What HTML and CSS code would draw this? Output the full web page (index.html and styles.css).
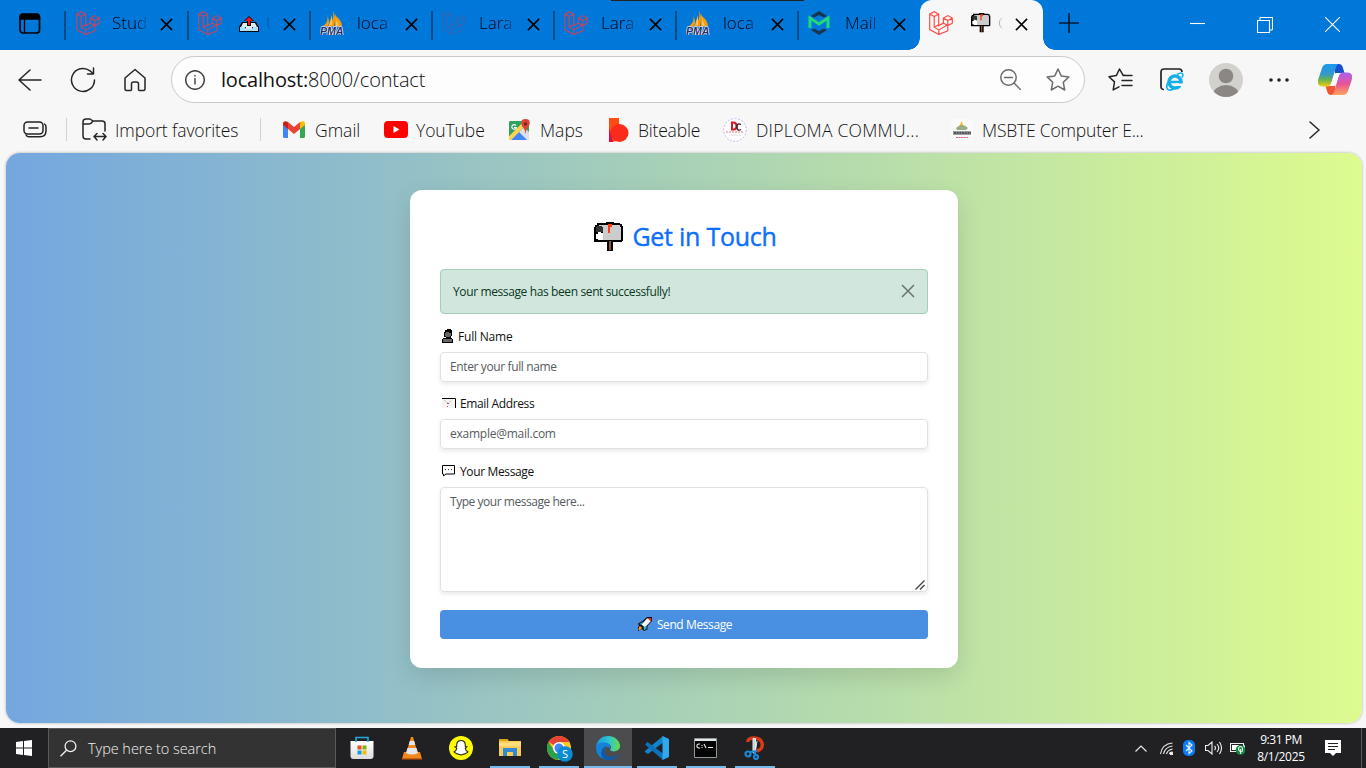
FILE: index.html
```html
<!DOCTYPE html>
<html lang="en">
<head>
<meta charset="utf-8">
<title>Contact</title>
<link rel="stylesheet" href="styles.css">
</head>
<body>
<svg class="defs" width="0" height="0" aria-hidden="true">
  <defs>
    <symbol id="laravel" viewBox="0 0 24 24"><path d="M.7 3.1 5.200.7l4.500 2.400v11.700l4.700-2.700V7.100l4.500-2.500 4.400 2.500v5.100l-4.500 2.500v5.200L9.800 23.500.7 18.600zM.7 3.100l4.500 2.500 4.500-2.500M5.200 5.600v10.600l4.600 2.700 9-5.100M9.800 18.900V23.500M14.400 7.100l4.400 2.500 4.500-2.500M18.800 9.600v5.100l-4.400-2.600M5.200 16.200l4.500-2.500"/></symbol>
    <symbol id="close" viewBox="0 0 14 14"><path d="M1 1l12 12M13 1L1 13"/></symbol>
    <symbol id="pma" viewBox="0 0 24 24"><path fill="#f89c0e" d="M7 5c1 3 1 7-5 11l6-1c2-3 1-7-1-10zM13 0c3 5 2 11 1 15H8c5-4 6-10 5-15zM15 3c1 4 6 4 7 12h-7z"/><path fill="#ffc14f" d="M16 7l3 8h-3zM12 4v10H9z"/><path fill="#999" d="M3 15h18v1H3z"/><text class="pma-word" x="0" y="23.500" textLength="23.500" lengthAdjust="spacingAndGlyphs">PMA</text></symbol>
    <symbol id="mailbox" viewBox="0 0 30 30"><path fill="#000" d="M3 1h9V0h8v1h6v1h2v2h1v15h-1v1H19v9h-6v-9H0V5h1V3h2z"/><path fill="#ccc" d="M5 3h21v2h1v13H9V8H8V5H5z"/><path fill="#333" d="M3 4h5v1h1v5H2V5h1z"/><path fill="#fff" d="M4 10h3v1h2v7H4v-1H2v-5h2z"/><path fill="#ff3b12" d="M14 2h4v3h-2v6h-2z"/><path fill="#8c5730" d="M15 19h2v9h-2z"/></symbol>
  </defs>
</svg>
<div class="screen">
  <header class="tabstrip">
    <div class="workspace"><svg width="22" height="22" viewBox="0 0 22 22"><rect x="1" y="1.500" width="19.500" height="18.500" rx="3" fill="none" stroke="#000" stroke-width="1.700"/><path d="M1 6V4q0-3 3-3h13.500q3 0 3 3v2zM5.500 6v14" stroke="#000" stroke-width="1.300"/></svg></div>
    <div class="tab first"><svg class="fav lara"><use href="#laravel"/></svg><span class="tab-title">Stud</span><svg class="x"><use href="#close"/></svg></div>
    <div class="tab"><svg class="fav lara"><use href="#laravel"/></svg><span class="tab-title"><svg class="outbox" viewBox="0 0 20 16"><path d="M3 6h14l3 5v5H0v-5z" fill="#000"/><path d="M4 7h12l2 4h-5v2H7v-2H2z" fill="#dfeaf1"/><path d="M1 11h5l1 2h6l1-2h5v4H1z" fill="#aee0fa"/><path d="M10 0l5 5h-3v5H8V5H5z" fill="#000"/><path d="M10 1l4 4h-3v4H9V5H6z" fill="#f11"/></svg><span>U</span></span><svg class="x"><use href="#close"/></svg></div>
    <div class="tab"><svg class="fav"><use href="#pma"/></svg><span class="tab-title">loca</span><svg class="x"><use href="#close"/></svg></div>
    <div class="tab"><svg class="fav lara dim"><use href="#laravel"/></svg><span class="tab-title">Lara</span><svg class="x"><use href="#close"/></svg></div>
    <div class="tab"><svg class="fav lara"><use href="#laravel"/></svg><span class="tab-title">Lara</span><svg class="x"><use href="#close"/></svg></div>
    <div class="tab"><svg class="fav"><use href="#pma"/></svg><span class="tab-title">loca</span><svg class="x"><use href="#close"/></svg></div>
    <div class="tab"><svg class="fav" viewBox="0 0 24 24"><path d="M3 5l8-5 8 5-3 1.500L11 4 6 6.500zM3 19l8 5 8-5-3-1.500-5 2.500-5-2.500z" fill="#18344f"/><path d="M2 17V7l9 6 9-6v10" fill="none" stroke="#22d77c" stroke-width="3"/></svg><span class="tab-title">Mail</span><svg class="x"><use href="#close"/></svg></div>
    <div class="tab active"><svg class="fav lara bright"><use href="#laravel"/></svg><span class="tab-title"><svg class="mini-mail"><use href="#mailbox"/></svg><span>C</span></span><svg class="x"><use href="#close"/></svg></div>
    <svg class="newtab" width="20" height="20" viewBox="0 0 20 20"><path d="M10 0v20M0 10h20" stroke="#001a33" stroke-width="1.600"/></svg>
    <div class="wincontrols">
      <svg width="15" height="16" viewBox="0 0 15 16"><path d="M0 6.500h15"/></svg>
      <svg width="16" height="16" viewBox="0 0 16 16"><path d="M.5 3.500h12v12H.5zM3 3V1q0-.5 1-.5h11.500V12q0 1-1 1H13"/></svg>
      <svg width="15" height="15" viewBox="0 0 15 15"><path d="M0 0l15 15M15 0L0 15"/></svg>
    </div>
    <div class="drag-line"></div>
  </header>

  <nav class="toolbar">
    <svg class="ln back" width="24" height="22" viewBox="0 0 24 22"><path d="M12 1L1 11l11 10M1 11h22"/></svg>
    <svg class="ln reload" width="26" height="26" viewBox="0 0 26 26"><path d="M24.500 13A11.500 11.500 0 1 1 20 3.800L23.500 7M23.500 1v6h-6"/></svg>
    <svg class="ln home" width="22" height="24" viewBox="0 0 22 24"><path d="M1 10L11 1.500 21 10v11q0 1.500-1.500 1.500h-4q-1 0-1-1V16q0-2-2-2h-3q-2 0-2 2v5.500q0 1-1 1h-4Q1 22.500 1 21z"/></svg>
    <div class="address">
      <svg class="ln info" width="20" height="20" viewBox="0 0 20 20"><circle cx="10" cy="10" r="9.300"/><path d="M10 8.500V14M10 5.500v.5"/></svg>
      <span class="url"><b>localhost:</b>8000/contact</span>
      <svg class="ln grey" width="21" height="21" viewBox="0 0 21 21"><circle cx="8.500" cy="8.500" r="7.700"/><path d="M14 14l6.500 6.500M4.500 8.500h8"/></svg>
      <svg class="ln grey star" width="24" height="23" viewBox="0 0 24 23"><path d="M12 1l3.200 6.900 7.700 1-5.600 5.400 1.400 7.700L12 18.200 5.300 22l1.400-7.700L1.100 8.900l7.700-1z"/></svg>
    </div>
    <svg class="ln favs" width="25" height="24" viewBox="0 0 25 24"><path d="M18 7.500l-3-.4L11.500 1 8.300 7.600 1 8.700l5.500 5.200-1.300 8 5.800-3.100M15 7.500h9M14 12.500h10M14 17.500h10"/></svg>
    <svg class="ie" width="24" height="24" viewBox="0 0 24 24"><path d="M4 21.500q-3 0-3-3V4q0-3 3-3h15q3 0 3 3" fill="none" stroke="#222" stroke-width="1.700"/><circle cx="15" cy="14" r="6" fill="none" stroke="#17afe8" stroke-width="3.500"/><path d="M9 14h13.500" stroke="#17afe8" stroke-width="2.500"/><path d="M16 15.500h8v2.500h-8z" fill="#f7f7f7"/><path d="M17 6.500c5-3 7-1 5 3M9 13c-5 7-1 12 6 7" fill="none" stroke="#17afe8" stroke-width="1.700"/></svg>
    <svg class="avatar" width="34" height="34" viewBox="0 0 34 34"><clipPath id="av"><circle cx="17" cy="17" r="17"/></clipPath><g clip-path="url(#av)"><path fill="#d3d1ce" d="M0 0h34v34H0z"/><circle cx="17" cy="13" r="7.300" fill="#8b8784"/><ellipse cx="17" cy="32" rx="13" ry="10" fill="#8b8784"/></g></svg>
    <svg class="dots" width="20" height="4" viewBox="0 0 20 4"><circle cx="2" cy="2" r="1.800"/><circle cx="10" cy="2" r="1.800"/><circle cx="18" cy="2" r="1.800"/></svg>
    <svg class="copilot" width="34" height="31" viewBox="0 0 34 31"><defs><linearGradient id="c1" x2="0" y2="1"><stop stop-color="#179bf0"/><stop offset=".45" stop-color="#3498c8"/><stop offset=".7" stop-color="#68b44d"/><stop offset="1" stop-color="#f7cb14"/></linearGradient><linearGradient id="c2" x2="0" y2="1"><stop stop-color="#a861f4"/><stop offset=".5" stop-color="#e8539a"/><stop offset="1" stop-color="#ffa35a"/></linearGradient></defs><path d="M17 0h4q3 0 4 4l1.500 5H20l-3 4z" fill="#1850cf"/><path d="M17 31h-4q-3 0-4-4l-1.500-5H14l3-4z" fill="#ef5632"/><path d="M9 0h12q-2 0-3 3l-4.500 15.500q-1 4-4 4H5q-7 0-4.500-8L4 4q1.500-4 5-4z" fill="url(#c1)"/><path d="M25 31H13q2 0 3-3l4.500-15.500q1-4 4-4H29q7 0 4.500 8L30 27q-1.500 4-5 4z" fill="url(#c2)"/><path d="M18 9h5q-2 1-2.500 3.500L18.500 19q-1 3-3.500 3h-4q2-1 2.500-3.500l2-6.500q.8-3 2.500-3z" fill="#fff"/></svg>
  </nav>

  <nav class="bookmarks">
    <svg class="ln side" width="24" height="17" viewBox="0 0 24 17"><rect x="1" y="1" width="19" height="12" rx="3.500"/><path d="M6 7h9M3 14q1 1.800 3 1.800h11q6 0 6-6V6q0-2-1.500-3"/></svg>
    <i class="bar"></i>
    <svg class="ln folder" width="26" height="23" viewBox="0 0 26 23"><path d="M8 21H4q-3 0-3-3V4q0-3 3-3h4l3 2h9q3 0 3 3v7M1 6h6q2 0 4-3M12 18.500h12M15 15.500l-3 3 3 3.500M21 15.500l3 3-3 3.500"/></svg>
    <span class="bm import">Import favorites</span>
    <i class="bar bar2"></i>
    <svg class="gmail" width="22" height="17" viewBox="0 0 22 17"><path fill="#4285f4" d="M0 3l5 4v10H1.500Q0 17 0 15.500z"/><path fill="#34a853" d="M17 7l5-4v12.500q0 1.500-1.500 1.500H17z"/><path fill="#ea4335" d="M5 1l6 5 6-5v7l-6 5-6-5z"/><path fill="#c5221f" d="M0 3q0-4 5-2v7L0 4z"/><path fill="#fbbc04" d="M22 3q0-4-5-2v7l5-4z"/></svg>
    <span class="bm b1">Gmail</span>
    <svg class="yt" width="24" height="17" viewBox="0 0 24 17"><rect width="24" height="17" rx="4" fill="#f00"/><path d="M9.500 5l6 3.500-6 3.500z" fill="#fff"/></svg>
    <span class="bm b2">YouTube</span>
    <svg class="maps" width="22" height="22" viewBox="0 0 22 22"><rect x="0" y="2" width="20" height="19" rx="2" fill="#2fa35a"/><path d="M2 21L15 8l5 5v8z" fill="#dde1e6"/><path d="M2 21l8-8 8 8z" fill="#4285f4"/><path d="M0 17L13 4l3 3L2 21H0z" fill="#fdd353"/><path d="M0 4q0-2 2-2h13L0 17z" fill="#2fa35a"/><path d="M16.500 15q0-4-3.500-8Q10.500 0 16.500 0T20 7q-3.500 4-3.500 8z" fill="#db4437"/><circle cx="16.500" cy="5" r="1.700" fill="#7b231e"/><path d="M7 6.500a2.300 2.300 0 1 0 .4 2H5" fill="none" stroke="#fff" stroke-width="1.200"/></svg>
    <span class="bm b3">Maps</span>
    <svg class="bite" width="20" height="24" viewBox="0 0 20 24"><path d="M0 0h10v7l-3 16-3 1H0z" fill="#ff4b12"/><circle cx="10.500" cy="15" r="9" fill="#fa2b1a"/><path d="M0 10l4 14H0z" fill="#e10b43"/></svg>
    <span class="bm b4">Biteable</span>
    <svg class="dip" width="24" height="24" viewBox="0 0 24 24"><circle cx="12" cy="12" r="11.300" fill="#fff" stroke="#cfb2ee" stroke-dasharray="2 1.500"/><path d="M9 4.500h1.500q3 0 3 3.500t-3 3.500H9z" fill="none" stroke="#d41b20" stroke-width="2"/><path d="M18 6.500q-4-2-4 2.500t4 2.500" fill="none" stroke="#222" stroke-width="1.300"/><path d="M3 14h18" stroke="#f07474" stroke-dasharray="2 1"/><path d="M6 17h12" stroke="#ddd"/></svg>
    <span class="bm b5">DIPLOMA COMMU...</span>
    <svg class="msb" width="22" height="22" viewBox="0 0 22 22"><path fill="#fafafa" d="M0 0h22v22H0z"/><path d="M10.500 2l2 5h-4z" fill="#f3bd25"/><path d="M5 9q6-6 12 0l-2 2H6z" fill="#81996d" opacity=".8"/><path d="M2 12h18v4H2z" fill="#777" opacity=".7"/><path d="M3 14h17" stroke="#303c40" stroke-width="1.500" stroke-dasharray="2 .7"/><path d="M5 18.500h12" stroke="#e35b80" stroke-width="1.200" stroke-dasharray="2 .6"/></svg>
    <span class="bm b6">MSBTE Computer E...</span>
    <svg class="ln more" width="11" height="18" viewBox="0 0 11 18"><path d="M1 1l9 8-9 8"/></svg>
  </nav>

  <main class="page">
    <section class="card">
      <h1><svg width="30" height="30"><use href="#mailbox"/></svg><span>Get in Touch</span></h1>
      <div class="alert"><span>Your message has been sent successfully!</span><svg width="14" height="14"><use href="#close"/></svg></div>
      <div class="label"><svg width="12" height="14" viewBox="0 0 12 14"><path fill="#000" d="M3 1h2V0h4v1h1v6H9v2h1v1h1v4H0v-4h1V9h3V8H2V3h1z"/><path fill="#666" d="M4 3h3v1h2v3H8v1H4V7H3V4h1zM1 10h9v3H1z"/></svg><span class="l1">Full Name</span></div>
      <div class="field"><span class="p1">Enter your full name</span></div>
      <div class="label lab2"><svg width="14" height="10" viewBox="0 0 14 10"><path fill="#f4f4f4" d="M0 1h13v9H0z"/><path d="M0 .5h13.500V10" fill="none" stroke="#000"/><path d="M2 2l4 3 4-3" fill="none" stroke="#aaa" stroke-dasharray="1 1"/><path d="M5 5.500h2M5 8.500h1" stroke="#d54b3d"/></svg><span class="l2">Email Address</span></div>
      <div class="field"><span class="p2">example@mail.com</span></div>
      <div class="label lab3"><svg width="14" height="12" viewBox="0 0 14 12"><path d="M1 .5h11.500v8.500H4L1.500 11V9H.5V.5z" fill="#fff" stroke="#000"/><path d="M3 4.500h8" stroke="#333" stroke-dasharray="1 2"/></svg><span class="l3">Your Message</span></div>
      <div class="field area"><span class="p3">Type your message here...</span><svg width="10" height="10" viewBox="0 0 10 10"><path d="M.5 9.500l9-9M5 9.500L9.500 5" stroke="#444" stroke-width="1.400"/></svg></div>
      <div class="send"><svg width="14" height="14" viewBox="0 0 14 14"><path d="M14 0v4L9.500 9v3.500L6 14l-2-2-4 2v-4l1-1-1-2.500L4.500 4 9 0z" fill="#111"/><path d="M13 1v3L7 10.500 3.500 7.500 9 1.500z" fill="#f5f8fa"/><path d="M9.500 1h3.800v4z" fill="#e8231b"/><path d="M5 4.500L1.500 7l2 1zM8.500 9v3L6 13l-.5-3z" fill="#24a9e8"/><path d="M1 9.500h2l1 1.500-2 2H.500z" fill="#ff9d20"/></svg><span>Send Message</span></div>
    </section>
  </main>

  <footer class="taskbar">
    <div class="start"><svg width="16" height="16" viewBox="0 0 16 16"><path fill="#fff" d="M0 2l7-1v6.500H0zM8 1l8-1v7.500H8zM0 8.500h7V15l-7-1zM8 8.500h8V16l-8-1z"/></svg></div>
    <div class="search"><svg width="17" height="17" viewBox="0 0 17 17"><circle cx="10.500" cy="6.200" r="5.400" fill="none" stroke="#eee" stroke-width="1.300"/><path d="M6.500 10.200L.5 16.300" stroke="#eee" stroke-width="1.400"/></svg><span>Type here to search</span></div>
    <div class="apps">
      <div class="app store"><svg width="24" height="24" viewBox="0 0 24 24"><defs><linearGradient id="sg" x2="0" y2="1"><stop stop-color="#fff"/><stop offset="1" stop-color="#ddd"/></linearGradient></defs><path d="M.5 5h23v15q0 3-3 3h-17q-3 0-3-3z" fill="url(#sg)"/><path d="M6 6V1.500h12V6" fill="none" stroke="#20a9df" stroke-width="1.600"/><path fill="#e74e26" d="M7.500 9.500h4v4h-4z"/><path fill="#7db700" d="M12.500 9.500h4v4h-4z"/><path fill="#08a0e8" d="M7.500 14.500h4v4h-4z"/><path fill="#fdb600" d="M12.500 14.500h4v4h-4z"/></svg></div>
      <div class="app"><svg width="22" height="24" viewBox="0 0 22 24"><path d="M3 16h16l2 7H1z" fill="#f1871d"/><path d="M10 1h2l5 17q-6 4-12 0z" fill="#f38c21"/><path d="M8.800 5h4.400l1 4H7.700zM6.500 12h9l1.500 5q-6 3-12 0z" fill="#e5e8eb"/><path d="M1 22h20v1.500H1z" fill="#cc5b0c"/></svg></div>
      <div class="app"><svg width="24" height="24" viewBox="0 0 24 24"><circle cx="12" cy="12" r="12" fill="#fffb05"/><path d="M12 4.500c4 0 4.500 3 4.300 6l1.600.4-1.700 1.500c.5 2 1.500 3 2.800 3.500-.5 1.200-2.500.8-3 2-1.500-.3-2 1-4 1s-2.500-1.300-4-1c-.5-1.200-2.500-.8-3-2 1.300-.5 2.300-1.500 2.800-3.500L6.100 10.900l1.600-.4c-.2-3 .3-6 4.300-6z" fill="#fff" stroke="#222" stroke-width="1.100"/></svg></div>
      <div class="app run"><svg width="22" height="20" viewBox="0 0 22 20"><path d="M0 2h9l1 1h12v15H0z" fill="#f9cc59"/><path d="M0 1h9v2H0z" fill="#dba51b"/><path d="M0 5h9l2-1h11v4H0z" fill="#ffdd7a"/><path d="M4 18v-8h14v8h-4v-4H8v4z" fill="#3189d6"/></svg></div>
      <div class="app run"><svg class="chrome" width="26" height="26" viewBox="0 0 26 26"><circle cx="12" cy="12" r="12" fill="#fac827"/><path d="M12 12L1.600 6A12 12 0 0 1 22.400 6H12z" fill="#e94335"/><path d="M1.600 6A12 12 0 0 0 11 24l5-9-8.500 0z" fill="#2aa24a"/><circle cx="12" cy="12" r="6" fill="#fff"/><circle cx="12" cy="12" r="4.500" fill="#4285f4"/><circle cx="18" cy="18" r="7.800" fill="#078bd3"/><text x="18" y="22" class="s-letter">S</text></svg></div>
      <div class="app run current"><svg width="24" height="24" viewBox="0 0 24 24"><defs><linearGradient id="e1"><stop stop-color="#1d94dc"/><stop offset=".5" stop-color="#2ac1d8"/><stop offset="1" stop-color="#66de4c"/></linearGradient></defs><path d="M0 11C1 3 7 0 12 0c7 0 12 5 12 10 0 5-7 7-10 4 3-4-1-7-5-7-5 0-8 2-9 4z" fill="url(#e1)"/><path d="M0 12C0 8 4 6.500 8 6.500c5 0 7 3 6 6-3-3-6-1-6 3 0 3 3 7 7 8C6 25 0 19 0 12z" fill="#1583d7"/><path d="M12.500 9.500C8 10 7 15 9 18c3 4 9 4 13 .5 1 .2.500.7 0 1.500-3 4-9 5-13 3.500C3 21 4 10 12.500 9.500z" fill="#0d5cab"/></svg></div>
      <div class="app run"><svg width="24" height="24" viewBox="0 0 24 24"><path d="M18 0v6.500L3 18l-3-2 0-1z" fill="#1483cd"/><path d="M0 8.500L2.500 6 18 17.500V24z" fill="#0c73bb"/><path d="M17.500 0L24 3v18l-6.500 3z" fill="#30a8ee"/></svg></div>
      <div class="app run"><svg width="23" height="20" viewBox="0 0 23 20"><path d="M.5.500h22v19H.5z" fill="#050505" stroke="#929999"/><path d="M1 1h21v2H1z" fill="#e3e8eb"/><path d="M6 6H4.500L3 7v2l1.500 1H6M8 7v1M8 9v1M10 6l2 4M14 9.500h5" fill="none" stroke="#eee" stroke-width="1.100"/></svg></div>
      <div class="app run snip"><svg width="22" height="24" viewBox="0 0 22 24"><path d="M4 6C3 1 16 0 18 7c1 4-1 7-5 8" fill="none" stroke="#d83b16" stroke-width="3.500"/><path d="M9 2.500h2.500V17H9zM13 5l-2 13" fill="#c5d0d6" stroke="#e6edef"/><circle cx="4" cy="18" r="2.500" fill="none" stroke="#1789d7" stroke-width="2.200"/><circle cx="12" cy="21" r="2" fill="none" stroke="#1789d7" stroke-width="2.200"/><path d="M6 16l7-1M11.500 18.500l-1-4" stroke="#1789d7" stroke-width="2"/></svg></div>
    </div>
    <div class="tray">
      <svg class="t1" width="12" height="7" viewBox="0 0 12 7"><path d="M.5 6.500L6 1l5.500 5.500"/></svg>
      <svg class="t2" width="13" height="13" viewBox="0 0 13 13"><path d="M.5 12Q2 2 12.500 1M3.500 12Q5 5 12.500 4M6.500 12q1-4 6-5M9.500 12q0-2 3-2"/><circle cx="11.500" cy="11.500" r="1.300" fill="#fff"/></svg>
      <svg class="t3" width="12" height="16" viewBox="0 0 12 16"><rect width="12" height="16" rx="5" fill="#087cf0" stroke="none"/><path d="M3 5l6 6-3 2.500v-11L9 5l-6 6"/></svg>
      <svg class="t4" width="17" height="14" viewBox="0 0 17 14"><path d="M.5 4.500h2.500L7 1v12L3 9.500H.500zM9.500 5q2 2 0 4M12 3q3.500 4 0 8M14.500 1q4 6 0 12"/></svg>
      <svg class="t5" width="16" height="13" viewBox="0 0 16 13"><path d="M.5 1.500h13v8H.5z"/><path d="M2 3h7v5H2zM14 3.500h1v4h-1z" fill="#fff" stroke="none"/><circle cx="10.500" cy="8" r="4.800" fill="#10893e" stroke="none"/><path d="M10.500 12V7M8.500 7.500q0-3 2-3t2 3-2 2-2-2z"/></svg>
      <div class="clock"><span>9:31 PM</span><span class="date">8/1/2025</span></div>
      <svg class="t6" width="16" height="16" viewBox="0 0 16 16"><path d="M0 0h16v13h-5l-3 3-3-3H0z" fill="#fff" stroke="none"/><path d="M3 3.500h10M3 6.500h10M3 9.500h7" stroke="#222"/></svg>
      <i class="peek"></i>
    </div>
  </footer>
</div>
</body>
</html>
```
FILE: styles.css
```css
* { box-sizing: border-box; }
body { margin: 0; font-family: "Open Sans", "Noto Sans", sans-serif; }
.screen { width: 1366px; height: 768px; display: flex; flex-direction: column; background: #f7f7f7; overflow: hidden; }
.screen svg { flex: none; display: block; }
.defs { position: absolute; }

.tabstrip { height: 50px; flex: none; background: #0078d9; display: flex; position: relative; }
.workspace { width: 65px; flex: none; padding: 13px 0 0 19px; }
.tab { width: 122px; flex: none; height: 50px; display: flex; align-items: center; position: relative; padding: 0 0 4px 10px; }
.tab::before { content: ""; position: absolute; left: -1px; top: 11px; width: 2px; height: 29px; background: #064a87; }
.tab.first { width: 123px; padding-left: 11px; }
.fav { width: 24px; height: 24px; }
.lara { fill: none; stroke: #b94866; stroke-width: 1.2; }
.lara.dim { stroke: #2f68b8; }
.lara.bright { stroke: #fb5048; }
.pma-word { font: italic bold 10px "Liberation Sans", sans-serif; fill: #242d65; stroke: #fff; stroke-width: 1.2px; paint-order: stroke; }
.tab-title { width: 40px; height: 26px; margin-left: 13px; font-size: 17px; line-height: 26px; color: #001; display: flex; gap: 7px; white-space: nowrap; font-weight: 300; -webkit-mask-image: linear-gradient(to right, #000 60%, transparent 94%); mask-image: linear-gradient(to right, #000 60%, transparent 94%); }
.tab.first .tab-title { margin-left: 12px; }
.tab-title .outbox { width: 20px; height: 16px; margin: 6px 0 0 4px; }
.tab-title .mini-mail { width: 20px; height: 20px; margin: 3px 0 0 5px; }
.screen .x { width: 13px; height: 13px; margin: 2px 0 0 8px; stroke: #000; stroke-width: 1.7; }
.tab.active { width: 123px; background: #f7f7f7; border-radius: 12px 12px 0 0; padding-left: 9px; }
.tab.active .x { margin-left: 9px; }
.tab.active::before { left: -12px; top: auto; bottom: 0; width: 12px; height: 12px; background: radial-gradient(circle at 0 0, transparent 11.5px, #f7f7f7 12px); }
.tab.active::after { content: ""; position: absolute; right: -12px; bottom: 0; width: 12px; height: 12px; background: radial-gradient(circle at 100% 0, transparent 11.5px, #f7f7f7 12px); }
.newtab { margin: 13px 0 0 16px; }
.wincontrols { margin: 17px 26px 0 auto; display: flex; gap: 52px; height: 16px; fill: none; stroke: #fff; stroke-width: 1.1; }
.drag-line { position: absolute; left: 611px; top: 0; width: 193px; height: 1px; background: #222; }

.ln { fill: none; stroke: #252525; stroke-width: 1.5; stroke-linecap: round; stroke-linejoin: round; }
.grey { stroke: #6c6c6c; }
.info { stroke: #444; }
.toolbar { height: 58px; flex: none; display: flex; align-items: center; padding-top: 1px; }
.back { margin-left: 18px; }
.reload { margin-left: 28px; }
.home { margin-left: 28px; }
.address { width: 914px; height: 47px; margin-left: 25px; border: 1.5px solid #c9c9c9; border-radius: 24px; background: #fdfdfd; display: flex; align-items: center; padding: 0 14px 0 13px; }
.url { flex: 1; margin: -1px 0 0 16px; font-size: 20px; font-weight: 300; color: #111; letter-spacing: -.15px; }
.url b { font-weight: 400; letter-spacing: -.2px; }
.star { margin-left: 25px; }
.favs { margin-left: 23px; }
.ie { margin-left: 27px; }
.avatar { margin-left: 25px; }
.dots { margin-left: 26px; fill: #222; }
.copilot { margin-left: 29px; }

.bookmarks { height: 45px; flex: none; display: flex; align-items: center; padding: 0 0 2px 23px; color: #111; }
.bar { width: 1px; height: 23px; background: #d2d2d2; margin-left: 19px; }
.folder { margin-left: 15px; }
.bm { flex: none; font-size: 17.5px; font-weight: 300; line-height: 26px; white-space: nowrap; margin-left: 8px; }
.import { width: 138px; letter-spacing: -.1px; margin-left: 7px; }
.bar2 { margin-left: 7px; }
.gmail { margin-left: 22px; }
.b1 { width: 60px; margin-left: 10px; }
.b2 { width: 85px; letter-spacing: -.1px; }
.yt { margin-left: 9px; }
.maps { margin-left: 8px; }
.b3 { width: 60px; margin-left: 9px; }
.b4 { width: 78px; margin-left: 9px; letter-spacing: -.2px; }
.bite { margin-left: 9px; }
.dip { margin-left: 7px; }
.b5 { width: 187px; margin-left: 9px; letter-spacing: .25px; }
.msb { margin-left: 8px; }
.b6 { width: 180px; margin-left: 9px; letter-spacing: -.2px; }
.more { margin: 0 46px 0 auto; }

.page { height: 570px; flex: none; margin: 0 4px 5px 6px; border-radius: 14px; background: linear-gradient(to right, #74a7df, #ddfb8e); box-shadow: 0 0 3px rgba(0,0,0,.3); padding: 37px 0 0 404px; }
.card { width: 548px; height: 478px; border-radius: 12px; background: #fff; box-shadow: 0 8px 24px rgba(0,0,0,.12); padding: 31px 30px 28px; display: flex; flex-direction: column; color: #212529; font-size: 12px; }
h1 { flex: none; margin: 0 0 17px 3px; height: 31px; display: flex; justify-content: center; gap: 8px; font-size: 25px; line-height: 30px; font-weight: 500; color: #0d6efd; letter-spacing: -.25px; -webkit-text-stroke: .4px #0d6efd; }
h1 svg { margin-top: 1px; }
.alert { height: 45px; flex: none; border: 1px solid #a3cfbb; border-radius: 4px; background: #d1e7dd; color: #0a3622; padding: 0 12px 1px 12px; display: flex; align-items: center; justify-content: space-between; letter-spacing: -.38px; }
.alert svg { stroke: #68736f; stroke-width: 1.5; }
.label { height: 18px; flex: none; margin: 13px 0 7px 2px; display: flex; align-items: center; gap: 4px; font-weight: 500; color: #111; letter-spacing: -.2px; }
.l2, .l3 { letter-spacing: -.36px; }
.lab2 { margin-top: 12px; }
.field { height: 30px; flex: none; border: 1px solid #dee2e6; border-radius: 4px; box-shadow: 0 2px 4px rgba(0,0,0,.09); padding: 5px 9px; line-height: 17px; color: #565b60; position: relative; letter-spacing: -.38px; }
.p2 { letter-spacing: -.25px; }
.p3 { letter-spacing: -.46px; }
.area { height: 105px; }
.area svg { position: absolute; right: 2px; bottom: 1px; }
.send { height: 29px; flex: none; margin-top: 18px; border-radius: 4px; background: #4a90e2; color: #fff; display: flex; align-items: center; justify-content: center; gap: 5px; padding: 0 0 1px 2px; letter-spacing: -.4px; }

.taskbar { height: 40px; flex: none; background: #212124; display: flex; color: #fff; }
.start { width: 48px; padding: 12px 16px; }
.search { width: 288px; border: 1px solid #5b5b5b; background: #333; display: flex; align-items: center; gap: 11px; padding-left: 11px; font-size: 14.5px; font-weight: 300; color: #f0f0f0; letter-spacing: -.05px; }
.apps { display: flex; margin-left: 2px; }
.app { width: 49px; height: 40px; display: flex; align-items: center; justify-content: center; position: relative; }
.store { padding-right: 1px; }
.chrome { margin: 1px 0 0 2px; }
.snip { padding-left: 1px; }
.run::after { content: ""; position: absolute; left: 5px; bottom: 0; width: 40px; height: 2px; background: #76b9ed; }
.current { background: #4c4c4f; width: 48px; margin: 0 0 0 1px; }
.current::after { left: 0; width: 48px; }
.s-letter { font: 11px "Open Sans", sans-serif; text-anchor: middle; fill: #fff; }
.tray { margin-left: auto; display: flex; align-items: center; fill: none; stroke: #eee; stroke-width: 1.1; }
.t2 { margin-left: 13px; }
.t3 { margin-left: 10px; }
.t4 { margin-left: 10px; }
.t5 { margin-left: 8px; }
.clock { width: 66px; margin-left: 2px; display: flex; flex-direction: column; align-items: center; font-size: 12px; line-height: 17px; letter-spacing: -.45px; }
.date { letter-spacing: -.3px; }
.t6 { margin-left: 11px; }
.peek { width: 1px; height: 40px; margin: 0 4px 0 20px; background: #5a5a5c; }
```
